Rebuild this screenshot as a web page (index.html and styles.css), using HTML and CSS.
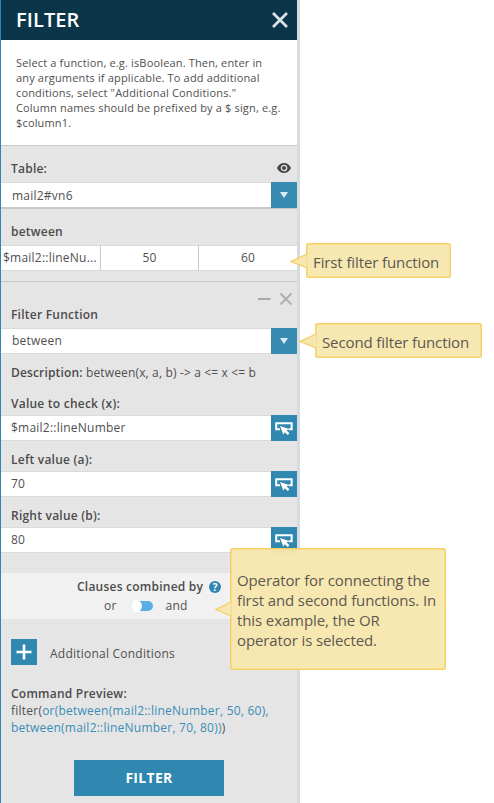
FILE: index.html
```html
<!DOCTYPE html>
<html lang="en">
<head>
<meta charset="utf-8">
<title>Filter</title>
<link rel="stylesheet" href="styles.css">
</head>
<body>
<svg class="defs" width="0" height="0">
  <symbol id="pick" viewBox="0 0 26 26">
    <path d="M9 14.2H5.2V8.3H20.7V14.2H17.6" fill="none" stroke="#fff" stroke-width="2"/>
    <path d="M9 11L18 14L15.6 15.4L18.4 18.3L16.6 20L13.9 17.2L12.3 19.6Z" fill="#fff"/>
  </symbol>
</svg>
<main class="panel">
  <header class="header">
    <h1>FILTER</h1>
    <svg class="close" width="16" height="16" viewBox="0 0 16 16"><path d="M1 1L15 15M15 1L1 15"/></svg>
  </header>
  <p class="intro">Select a function, e.g. isBoolean. Then, enter in<br>any arguments if applicable. To add additional<br>conditions, select "Additional Conditions."<br>Column names should be prefixed by a $ sign, e.g.<br>$column1.</p>
  <section class="table-row">
    <label>Table:</label>
    <svg width="14" height="10" viewBox="0 0 14 10"><path d="M0 5C3-1.6 11-1.6 14 5C11 11.6 3 11.6 0 5Z" fill="#444"/><circle cx="7" cy="5" r="2.7" fill="none" stroke="#e5e5e5" stroke-width="1.3"/></svg>
  </section>
  <div class="field select first"><span>mail2#vn6</span><button><i class="caret"></i></button></div>
  <h2 class="group">between</h2>
  <div class="summary"><span>$mail2::lineNu...</span><span>50</span><span>60</span></div>
  <div class="tools"><svg width="34" height="12" viewBox="0 0 34 12"><path d="M0 6H12.5M22.5 .5L33.5 11.5M33.5 .5L22.5 11.5"/></svg></div>
  <h2 class="name">Filter Function</h2>
  <div class="field select"><span>between</span><button><i class="caret"></i></button></div>
  <p class="description"><b>Description:</b> between(x, a, b) -&gt; a &lt;= x &lt;= b</p>
  <label class="arg arg-first">Value to check (x):</label>
  <div class="field"><span>$mail2::lineNumber</span><button><svg width="26" height="26"><use href="#pick"/></svg></button></div>
  <label class="arg">Left value (a):</label>
  <div class="field"><span>70</span><button><svg width="26" height="26"><use href="#pick"/></svg></button></div>
  <label class="arg">Right value (b):</label>
  <div class="field"><span>80</span><button><svg width="26" height="26"><use href="#pick"/></svg></button></div>
  <section class="combine">
    <div class="combine-title"><b>Clauses combined by</b><span class="help">?</span></div>
    <div class="choice"><span>or</span><i class="toggle"></i><span>and</span></div>
  </section>
  <div class="add">
    <button><svg width="26" height="26" viewBox="0 0 26 26"><path d="M5.5 13H20.5M13 5.5V20.5" stroke="#fff" stroke-width="2.6"/></svg></button>
    <span>Additional Conditions</span>
  </div>
  <div class="preview"><b>Command Preview:</b><br>filter(<em>or(between(mail2::lineNumber, 50, 60),</em><br><em>between(mail2::lineNumber, 70, 80))</em>)</div>
  <button class="submit">FILTER</button>
</main>
<aside class="note note-first"><svg width="18" height="18" viewBox="0 0 18 18"><path d="M17 2L1 9.5L17 16"/></svg>First filter function</aside>
<aside class="note note-second"><svg width="18" height="18" viewBox="0 0 18 18"><path d="M17 2L1 9.5L17 16"/></svg>Second filter function</aside>
<aside class="note note-operator"><svg width="18" height="18" viewBox="0 0 18 18"><path d="M17 2L2 9.5L17 16"/></svg>Operator for connecting the<br>first and second functions. In<br>this example, the OR<br>operator is selected.</aside>
</body>
</html>
```
FILE: styles.css
```css
* { box-sizing: border-box; }
body {
  margin: 0;
  height: 803px;
  overflow: hidden;
  position: relative;
  background: #fff;
  color: #505050;
  font: 12px/16px "Open Sans", "Noto Sans", sans-serif;
  letter-spacing: .23px;
}
h1, h2, p { margin: 0; }
button { border: 0; padding: 0; background: #3087af; color: #fff; font-family: inherit; }
b, label, h2 { font-weight: 600; font-size: 12px; color: #4c4c4c; }
svg { display: block; }
.defs { position: absolute; }
.panel {
  width: 300px;
  height: 803px;
  background: #e5e5e5;
  border-left: 1px solid #2f88b1;
  border-right: 3px solid #d6dbdf;
  display: flex;
  flex-direction: column;
}
.panel > * { flex-shrink: 0; }
.header {
  height: 40px;
  padding: 0 9px 0 15px;
  background: #0b3549;
  display: flex;
  align-items: center;
  justify-content: space-between;
}
.header h1 { font-size: 20px; line-height: 40px; font-weight: 600; color: #fff; letter-spacing: .1px; }
.close path { stroke: #dce2e5; stroke-width: 2.8; }
.intro {
  height: 106px;
  padding: 15px 0 0 15px;
  background: #fff;
  border-bottom: 1px solid #c8c8c8;
  font-size: 11px;
  line-height: 15px;
  white-space: nowrap;
  letter-spacing: .16px;
}
.table-row { height: 36px; padding: 9px 6px 0 10px; display: flex; justify-content: space-between; }
.table-row label { line-height: 28px; }
.table-row svg { margin-top: 8px; }
.field {
  height: 26px;
  background: #fff;
  border-top: 1px solid #dadada;
  border-bottom: 1px solid #dadada;
  display: flex;
  justify-content: space-between;
  line-height: 24px;
  padding-left: 10px;
}
.field button { width: 26px; height: 26px; margin-top: -1px; display: flex; align-items: center; justify-content: center; }
.select { padding-left: 11px; }
.select button { background: #378ab2; }
.first { height: 27px; border-bottom: 2px solid #c9c9c9; line-height: 26px; }
.caret { border: 4.5px solid transparent; border-top: 6px solid #dcebf3; border-bottom: 0; margin-top: -1px; }
.group { height: 36px; padding-left: 10px; line-height: 45px; }
.summary {
  height: 26px;
  border-top: 1px solid #dadada;
  border-bottom: 1px solid #dadada;
  background: #fff;
  display: grid;
  grid-template-columns: 99px 98px 99px;
  line-height: 24px;
  text-align: center;
}
.summary span:first-child { text-align: left; padding-left: 2px; }
.summary span + span { border-left: 1px solid #c8c8c8; }
.tools { height: 25px; margin-top: 10px; border-top: 1px solid #c8c8c8; padding: 11px 5px 0 0; display: flex; justify-content: flex-end; }
.tools path { fill: none; stroke: #aaa; stroke-width: 1.8; }
.name { height: 22px; padding-left: 10px; line-height: 17px; }
.description { padding: 11px 0 0 10px; height: 35px; letter-spacing: .15px; }
.arg { height: 30px; padding-left: 10px; line-height: 38px; }
.arg-first { height: 26px; line-height: 30px; }
.combine { height: 46px; margin-top: 20px; background: #f1f1f1; padding-top: 5px; }
.combine-title { display: flex; height: 17px; align-items: center; padding-left: 76px; }
.help {
  width: 12px; height: 12px; margin: 1px 0 0 6px;
  border-radius: 50%; background: #3087af; color: #fff;
  font-size: 10px; line-height: 12px; font-weight: 700; text-align: center; letter-spacing: 0;
}
.choice { display: flex; align-items: center; height: 22px; padding-left: 103px; }
.toggle { width: 22px; height: 10px; margin: 0 13px 0 14px; border-radius: 5px; background: #5aaee8; display: flex; align-items: center; }
.toggle::before { content: ""; width: 11px; height: 12px; flex: none; border-radius: 50%; background: #fff; }
.add { display: flex; height: 26px; margin: 20px 0 0 10px; }
.add button { width: 26px; height: 26px; }
.add span { margin-left: 13px; line-height: 30px; }
.preview { height: 51px; margin: 20px 0 0 10px; line-height: 17px; white-space: nowrap; }
.preview em { font-style: normal; color: #3a8db5; }
.submit { width: 150px; height: 36px; margin: 24px 0 0 73px; font-size: 14px; font-weight: 700; line-height: 36px; letter-spacing: .3px; }
/* Callouts float over the panel and the empty page beside it. */
.note {
  position: absolute;
  border: 1px solid #f5d064;
  border-radius: 2px;
  box-shadow: inset 0 0 0 1px #f7dc8e;
  background: rgba(247, 231, 174, .96);
  color: #5c5850;
  font-size: 15px;
  line-height: 20px;
  letter-spacing: -.11px;
  white-space: nowrap;
}
.note svg { position: absolute; left: -17px; }
.note path { fill: #f7e7ae; stroke: #f4cc62; stroke-width: 1.2; }
.note-first { left: 306px; top: 243px; width: 145px; height: 35px; padding: 8px 0 0 6px; }
.note-first svg { top: 8px; }
.note-second { left: 315px; top: 323px; width: 167px; height: 35px; padding: 8px 0 0 6px; }
.note-second svg { top: 8px; }
.note-operator { left: 230px; top: 548px; width: 216px; height: 122px; padding: 21px 0 0 6px; }
.note-operator svg { top: 51px; }
```
